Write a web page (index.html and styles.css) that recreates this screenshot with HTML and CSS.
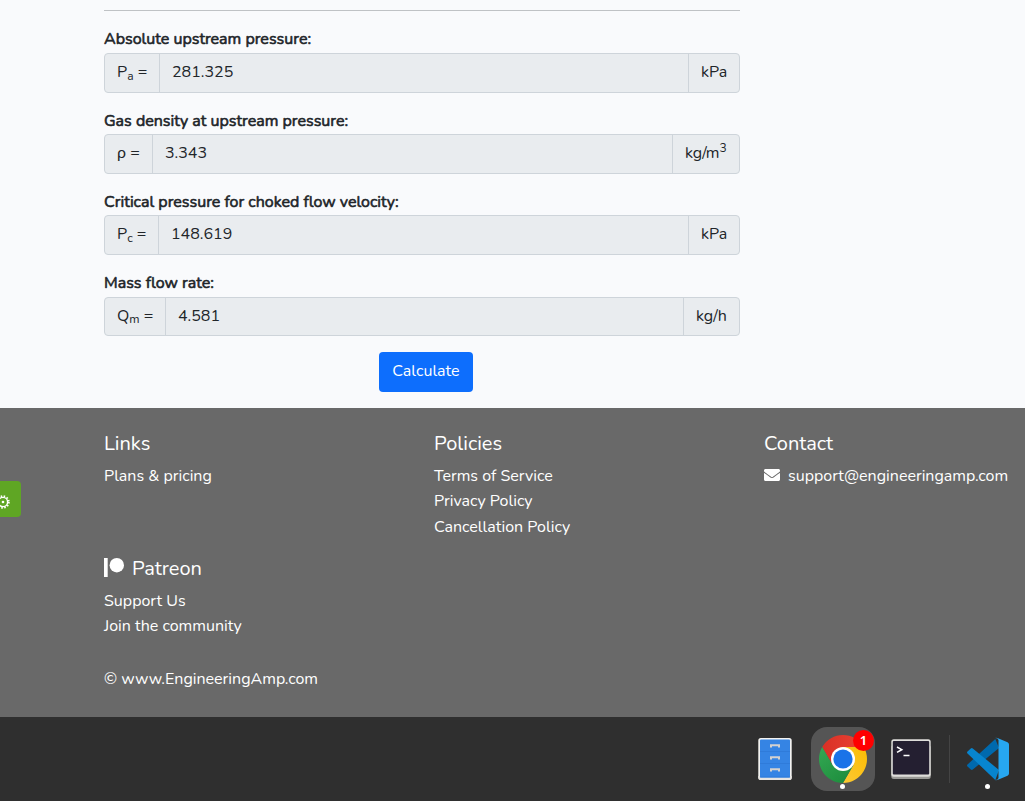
FILE: index.html
```html
<!DOCTYPE html>
<html lang="en">
<head>
<meta charset="utf-8">
<title>EngineeringAmp</title>
<link rel="stylesheet" href="styles.css">
</head>
<body>
<main class="results">
  <hr class="rule">
  <div class="field">
    <div class="label">Absolute upstream pressure:</div>
    <div class="group">
      <span class="addon sym-pa">P<sub>a</sub> =</span><span class="value">281.325</span><span class="addon unit-kpa">kPa</span>
    </div>
  </div>
  <div class="field">
    <div class="label">Gas density at upstream pressure:</div>
    <div class="group">
      <span class="addon sym-rho">ρ =</span><span class="value">3.343</span><span class="addon unit-density">kg/m<sup>3</sup></span>
    </div>
  </div>
  <div class="field">
    <div class="label">Critical pressure for choked flow velocity:</div>
    <div class="group">
      <span class="addon sym-pc">P<sub>c</sub> =</span><span class="value">148.619</span><span class="addon unit-kpa">kPa</span>
    </div>
  </div>
  <div class="field">
    <div class="label">Mass flow rate:</div>
    <div class="group">
      <span class="addon sym-qm">Q<sub>m</sub> =</span><span class="value">4.581</span><span class="addon unit-rate">kg/h</span>
    </div>
  </div>
  <div class="actions"><button class="calculate" type="button">Calculate</button></div>
</main>

<footer class="footer">
  <div class="columns">
    <section>
      <h5 class="heading">Links</h5>
      <a class="link">Plans &amp; pricing</a>
    </section>
    <section>
      <h5 class="heading">Policies</h5>
      <a class="link">Terms of Service</a>
      <a class="link">Privacy Policy</a>
      <a class="link">Cancellation Policy</a>
    </section>
    <section>
      <h5 class="heading">Contact</h5>
      <a class="link mail">
        <svg class="envelope" viewBox="0 0 512 384"><path fill="#fff" d="M502.300 126.800c3.900-3.100 9.700-.2 9.700 4.700V336c0 26.500-21.500 48-48 48H48c-26.500 0-48-21.500-48-48V131.600c0-5 5.700-7.800 9.700-4.700 22.400 17.400 52.100 39.500 154.100 113.600 21.100 15.400 56.700 47.800 92.200 47.600 35.700.3 72-32.800 92.300-47.600 102-74.100 131.600-96.300 154-113.700zM256 256c23.200.4 56.600-29.200 73.400-41.400 132.700-96.300 142.800-104.700 173.400-128.700 5.800-4.500 9.200-11.500 9.200-18.900V48c0-26.500-21.500-48-48-48H48C21.500 0 0 21.500 0 48v19c0 7.400 3.400 14.300 9.200 18.900 30.600 23.900 40.700 32.400 173.400 128.700 16.800 12.200 50.200 41.800 73.400 41.400z"/></svg>
        <span>support@engineeringamp.com</span>
      </a>
    </section>
    <section>
      <h5 class="heading patreon-heading">
        <svg class="patreon-logo" viewBox="0 0 20 20"><path fill="#fff" d="M0 1h3.700v19H0z"/><circle cx="12.800" cy="8.200" r="7.200" fill="#fff"/></svg>
        <span>Patreon</span>
      </h5>
      <a class="link">Support Us</a>
      <a class="link">Join the community</a>
    </section>
  </div>
  <div class="copyright">© www.EngineeringAmp.com</div>
</footer>

<div class="settings">
  <svg class="gear" viewBox="0 0 16 16"><g fill="none" stroke="#fff"><circle cx="8" cy="8" r="4.600" stroke-width="1.400"/><circle cx="8" cy="8" r="5.900" stroke-width="1.700" stroke-dasharray="1.540 1.549"/></g><circle cx="8" cy="8" r="1.300" fill="#fff"/></svg>
</div>

<div class="dock">
  <div class="app">
    <svg class="icon" viewBox="0 0 64 64">
      <rect x="15.300" y="11" width="33.400" height="42" rx="2.500" fill="#f3f2f0"/>
      <path d="M15.300 49h33.400v1.500a2.500 2.500 0 0 1-2.500 2.500H17.800a2.500 2.500 0 0 1-2.500-2.500z" fill="#e6e4e1"/>
      <rect x="17" y="12.500" width="30" height="38" rx="1" fill="#3584e4"/>
      <path d="M17 24.500h30M17 36.500h30M17 50h30" stroke="#2f7bda"/>
      <path d="M28 20.500v-2.200h8v2.200M28 32.500v-2.200h8v2.200M28 44.500v-2.200h8v2.200" fill="none" stroke="#d3d1cf" stroke-width="2"/>
    </svg>
  </div>
  <div class="app active">
    <svg class="icon" viewBox="0 0 64 64">
      <defs>
        <linearGradient id="red" x1="0" y1="0" x2="1" y2="0"><stop stop-color="#d93025"/><stop offset="1" stop-color="#ea4335"/></linearGradient>
        <linearGradient id="green" x1="0" y1="0" x2=".7" y2="1"><stop stop-color="#34a853"/><stop offset="1" stop-color="#1e8e3e"/></linearGradient>
        <linearGradient id="yellow" x1="1" y1="0" x2="0" y2="1"><stop stop-color="#fbbc04"/><stop offset="1" stop-color="#fcc934"/></linearGradient>
      </defs>
      <path d="M11.220 20A24 24 0 0 1 52.780 20H32L21.600 38z" fill="url(#red)"/>
      <path d="M52.780 20A24 24 0 0 1 32 56L42.400 38 32 20z" fill="url(#yellow)"/>
      <path d="M32 56A24 24 0 0 1 11.220 20L21.600 38 42.400 38z" fill="url(#green)"/>
      <circle cx="32" cy="32" r="12" fill="#fff"/><circle cx="32" cy="32" r="9.600" fill="#1a73e8"/>
    </svg>
    <span class="badge">1</span><span class="dot"></span>
  </div>
  <div class="app">
    <svg class="icon" viewBox="0 0 64 64">
      <rect x="12.300" y="18" width="39.400" height="34" rx="2.500" fill="#9a9996"/>
      <rect x="12.300" y="12.300" width="39.400" height="37.500" rx="2.500" fill="#deddda"/>
      <rect x="13.800" y="14" width="36.400" height="33.500" rx="1" fill="#241f31"/>
      <path d="M18 20l4.800 2.700-4.800 2.700M24.500 28.500h6" fill="none" stroke="#fff" stroke-width="1.500"/>
    </svg>
  </div>
  <span class="separator"></span>
  <div class="app">
    <svg class="icon" viewBox="0 0 64 64">
      <path d="M11.500 39.500q-1-1 0-2L39.300 12 43 21 16.800 42.500q-1 .9-2 0z" fill="#0069ad"/>
      <path d="M11.500 24.500q-1 1 0 2L39.300 53 43 43 16.800 21.500q-1-.9-2 0z" fill="#0785cf"/>
      <path d="M38.500 52.800q3 .7 4-1.800V13q-1-2.500-4-1.800 1.500-.7 3.500.1l9.500 4q1.500.7 1.500 2.200v29q0 1.500-1.500 2.200l-9.500 4q-2 .8-3.500.1z" fill="#27a7f1"/>
    </svg>
    <span class="dot"></span>
  </div>
</div>
</body>
</html>
```
FILE: styles.css
```css
* { box-sizing: border-box; }
body {
  margin: 0;
  width: 1025px;
  height: 801px;
  overflow: hidden;
  background: #f9fafc;
  color: #212529;
  font: 16px/25.6px Nunito, Lato, sans-serif;
}
.results { width: 740px; height: 408px; padding: 10.4px 0 0 104px; }
.rule { height: 1px; margin: 0 0 16px; border: 0; background: #bfc2c5; }
.field { margin-bottom: 16px; }
.label { -webkit-text-stroke: .6px #212529; }
.group {
  display: flex;
  height: 39.6px;
  border: 1px solid #ced4da;
  border-radius: 4px;
  background: #e9ecef;
}
.addon { flex: none; padding: 6px 0 0 12px; white-space: nowrap; }
.value { flex: 1; padding: 6px 12px 0; border: solid #ced4da; border-width: 0 1px; }
.sym-pa { width: 54px; }
.sym-rho { width: 47px; }
.sym-pc { width: 53px; }
.sym-qm { width: 60px; }
.unit-kpa { width: 50px; }
.unit-density { width: 66px; }
.unit-rate { width: 55px; }
sub, sup { position: relative; font-size: 12px; line-height: 0; vertical-align: baseline; }
sub { bottom: -3px; }
.sym-qm sub { bottom: -2px; }
sup { top: -6px; }
.actions { padding-left: 275px; }
.calculate {
  display: block;
  width: 94px;
  height: 39.6px;
  padding: 0;
  border: 0;
  border-radius: 4px;
  background: #0d6efd;
  color: #fff;
  font: inherit;
}
.footer { height: 309px; padding: 23.8px 0 0 104px; background: #696969; color: #fff; }
.columns { display: grid; grid-template-columns: 330px 330px auto; row-gap: 16px; }
.heading { margin: 0 0 8px; font-size: 20px; font-weight: 400; line-height: 24px; }
.link { display: block; width: max-content; }
.mail { display: flex; align-items: center; gap: 8px; }
.envelope { width: 16px; height: 12px; margin-top: -3px; }
.patreon-heading { display: flex; gap: 8px; }
.patreon-logo { width: 20px; height: 20px; }
.copyright { padding-top: 27.2px; }
.settings {
  position: absolute;
  left: 0;
  top: 481px;
  width: 21px;
  height: 36px;
  overflow: hidden;
  border-radius: 0 4px 4px 0;
  background: #5fa624;
}
.gear { display: block; width: 16px; height: 16px; margin: 12.5px 0 0 -5.500px; }
.dock {
  display: flex;
  height: 84px;
  padding: 10px 5px 0 743px;
  background: #2f2f2f;
}
.app { position: relative; flex: none; width: 64px; height: 64px; margin-right: 4px; }
.app.active { border-radius: 16px; background: #555; }
.icon { display: block; width: 64px; height: 64px; }
.badge {
  position: absolute;
  left: 42px;
  top: 3px;
  width: 21px;
  height: 21px;
  border-radius: 50%;
  background: #f00;
  color: #fff;
  font: 600 13px/21px "Noto Sans", sans-serif;
  text-align: center;
}
.dot { position: absolute; left: 29px; top: 57px; width: 5px; height: 5px; border-radius: 50%; background: #fff; }
.separator { flex: none; width: 1px; height: 48px; margin: 8px 6px 0 2px; background: #444; }
```
